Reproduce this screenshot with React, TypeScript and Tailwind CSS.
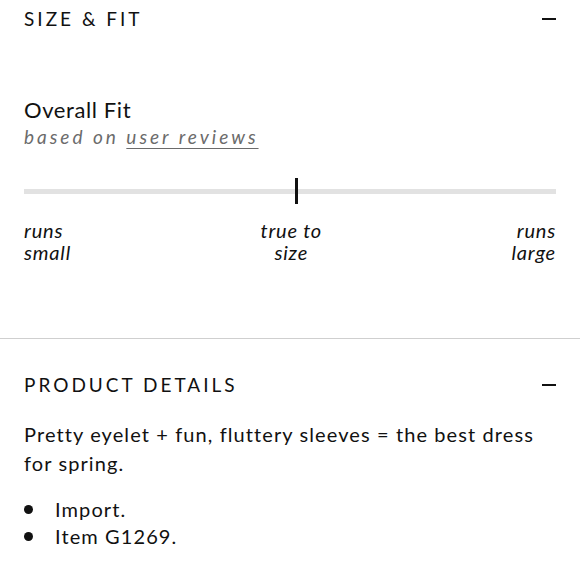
export default function App() {
  const font = { fontFamily: 'Lato, "Noto Sans", sans-serif' };
  return (
    <div className="h-[580px] w-[580px] overflow-hidden bg-white text-[#111]" style={font}>
      <section className="px-6 pb-[75px]">
        <div className="flex items-center justify-between pt-[6px]">
          <h2 className="text-[19px] leading-[26px] tracking-[3px]">SIZE &amp; FIT</h2>
          <span className="block h-[2px] w-[14px] bg-[#111]" />
        </div>

        <div className="mt-[64px]">
          <h3 className="text-[22px] leading-[28px] tracking-[0.6px]">Overall Fit</h3>
          <p className="text-[19px] italic leading-[26px] tracking-[3px] text-[#6b6b6b]">
            based on <span className="underline underline-offset-[4px]">user reviews</span>
          </p>
        </div>

        <div className="relative mt-[28px] h-[26px]">
          <div className="absolute left-0 right-0 top-[11px] h-[5px] bg-[#e2e2e2]" />
          <div className="absolute left-[271px] top-0 h-[26px] w-[3px] bg-[#111]" />
        </div>

        <div className="mt-[15px] flex justify-between text-[20px] italic leading-[22px] tracking-[0.8px]">
          <p>runs<br />small</p>
          <p className="text-center">true to<br />size</p>
          <p className="text-right">runs<br />large</p>
        </div>
      </section>

      <div className="h-px w-full bg-[#cfcfcf]" />

      <section className="px-6">
        <div className="mt-[33px] flex items-center justify-between">
          <h2 className="text-[19px] leading-[26px] tracking-[3px]">PRODUCT DETAILS</h2>
          <span className="block h-[2px] w-[14px] bg-[#111]" />
        </div>

        <p className="mt-[22px] text-[20px] leading-[29px] tracking-[1.1px]">
          Pretty eyelet + fun, fluttery sleeves = the best dress for spring.
        </p>

        <ul className="mt-[18px] text-[20px] leading-[27px] tracking-[1.1px]">
          {['Import.', 'Item G1269.'].map((item) => (
            <li key={item} className="flex items-center">
              <span className="mr-[22px] block h-[9px] w-[9px] rounded-full bg-[#111]" />
              {item}
            </li>
          ))}
        </ul>
      </section>
    </div>
  );
}
